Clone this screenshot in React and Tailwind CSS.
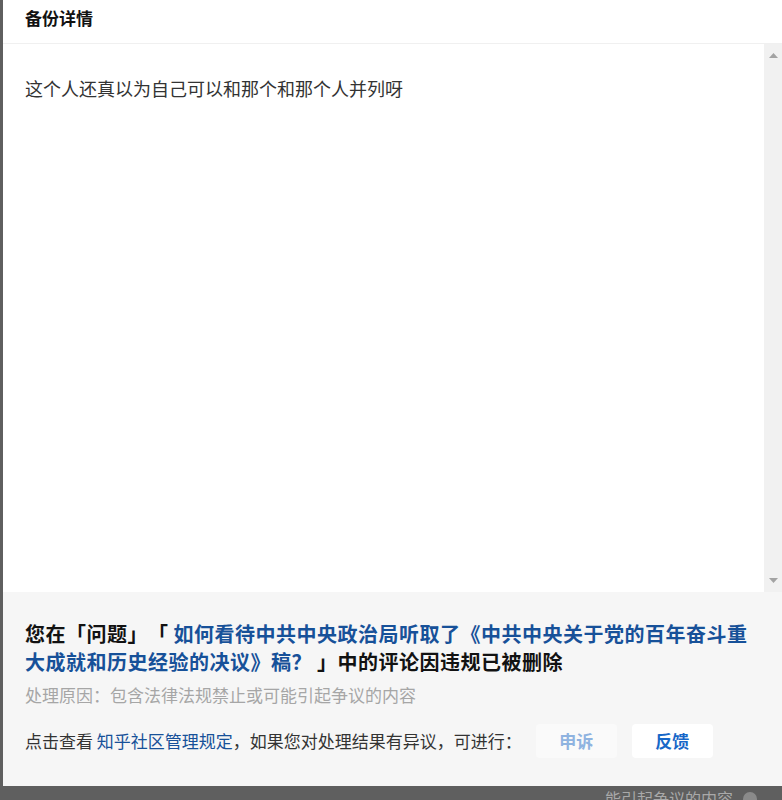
import React from "react";

const cjk = { fontFamily: '"Noto Sans CJK SC", "Noto Sans", sans-serif' };

function ScrollArrow({ down }) {
  return (
    <svg width="9" height="5" viewBox="0 0 9 5" className="block">
      {down ? (
        <polygon points="0,0 9,0 4.5,5" fill="#a3a3a3" />
      ) : (
        <polygon points="0,5 9,5 4.5,0" fill="#a3a3a3" />
      )}
    </svg>
  );
}

export default function App() {
  return (
    <div
      className="w-[782px] h-[800px] bg-[#5f5f5f] flex flex-col overflow-hidden [text-spacing-trim:space-all]"
      style={cjk}
    >
      <div className="ml-[3px] h-[786px] flex flex-col shrink-0">
        {/* Header */}
        <div className="h-[44px] bg-white border-b border-[#f0f0f0] px-[22px] pt-[7px] shrink-0">
          <h2 className="text-[17px] leading-[22px] font-bold text-[#121212]">
            备份详情
          </h2>
        </div>

        {/* Body with scrollbar */}
        <div className="h-[548px] flex bg-white shrink-0">
          <div className="flex-1 px-[22px] pt-[31px]">
            <p className="text-[18px] leading-[26px] text-[#333]">
              这个人还真以为自己可以和那个和那个人并列呀
            </p>
          </div>
          <div className="w-[18px] bg-[#f1f1f1] flex flex-col items-center justify-between pt-[9px] pb-[9px]">
            <ScrollArrow />
            <ScrollArrow down />
          </div>
        </div>

        {/* Footer */}
        <div className="flex-1 bg-[#f6f6f6] px-[22px] pt-[28px]">
          <h3 className="max-w-[730px] text-[20px] leading-[28px] font-bold tracking-[0.5px] text-[#121212]">
            您在「问题」「{" "}
            <span className="text-[#175199]">
              如何看待中共中央政治局听取了《中共中央关于党的百年奋斗重大成就和历史经验的决议》稿？
            </span>{" "}
            」中的评论因违规已被删除
          </h3>
          <p className="mt-[7px] text-[17px] leading-[24px] text-[#a6a6a6]">
            处理原因：包含法律法规禁止或可能引起争议的内容
          </p>
          <div className="mt-[17px] flex items-center">
            <span className="text-[17px] leading-[24px] text-[#333]">
              点击查看 <span className="text-[#175199]">知乎社区管理规定</span>
              ，如果您对处理结果有异议，可进行：
            </span>
            <button className="ml-[14px] w-[81px] h-[34px] rounded bg-[#fafafa] text-[17px] font-bold text-[#8fb3e0]">
              申诉
            </button>
            <button className="ml-[15px] w-[81px] h-[34px] rounded bg-white text-[17px] font-bold text-[#1767c8]">
              反馈
            </button>
          </div>
        </div>
      </div>

      {/* Overlay peek of page below */}
      <div className="h-[14px] overflow-hidden flex justify-end pr-[25px] shrink-0">
        <div className="flex items-start gap-[10px] pt-[2px]">
          <span className="text-[16px] leading-[20px] text-[#a9a9a9]">
            能引起争议的内容
          </span>
          <span className="mt-[4px] w-[14px] h-[14px] rounded-full bg-[#8a8a8a]" />
        </div>
      </div>
    </div>
  );
}
